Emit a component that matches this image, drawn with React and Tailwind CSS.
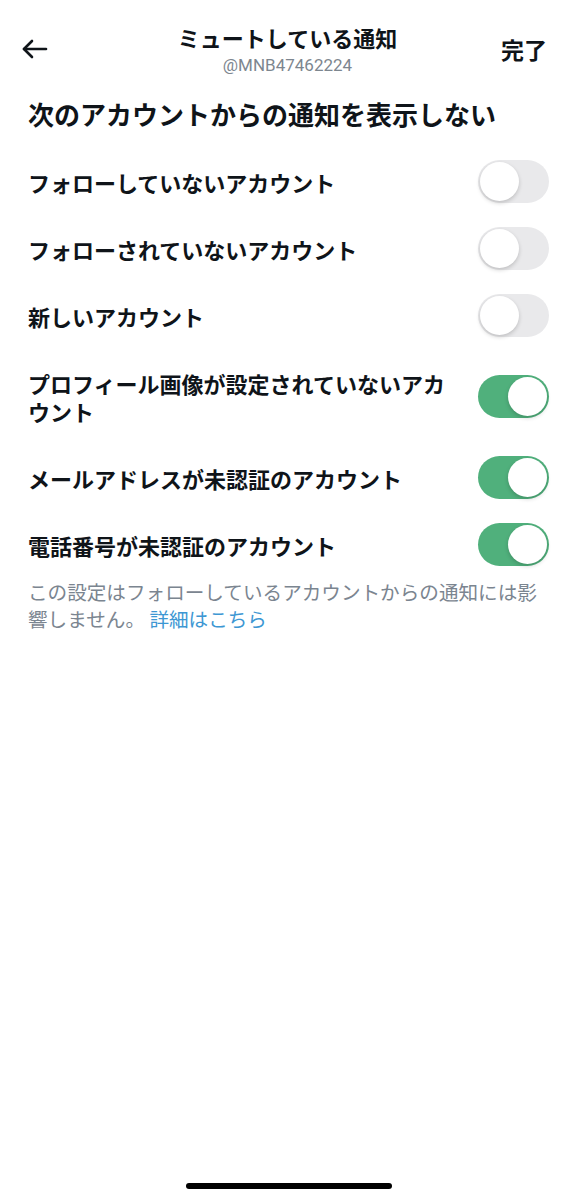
import { useState } from "react"

const jp = { fontFamily: '"Noto Sans CJK JP", "Noto Sans", sans-serif' }

const initial = [
  { id: 1, label: "フォローしていないアカウント", on: false },
  { id: 2, label: "フォローされていないアカウント", on: false },
  { id: 3, label: "新しいアカウント", on: false },
  { id: 4, label: "プロフィール画像が設定されていないアカウント", on: true },
  { id: 5, label: "メールアドレスが未認証のアカウント", on: true },
  { id: 6, label: "電話番号が未認証のアカウント", on: true },
]

function Toggle({ on, onClick }) {
  return (
    <button
      onClick={onClick}
      className={`relative shrink-0 w-[71px] h-[43px] rounded-full transition-colors ${
        on ? "bg-[#50b07c]" : "bg-[#e9e9eb]"
      }`}
    >
      <span
        className={`absolute top-[2px] w-[39px] h-[39px] rounded-full bg-white shadow-[0_2px_4px_rgba(0,0,0,0.18)] transition-all ${
          on ? "left-[30px]" : "left-[2px]"
        }`}
      />
    </button>
  )
}

export default function App() {
  const [items, setItems] = useState(initial)

  const flip = (id) => setItems(items.map((it) => (it.id === id ? { ...it, on: !it.on } : it)))

  return (
    <div className="min-h-[1200px] flex flex-col bg-white text-[#0f1419]" style={jp}>
      {/* header */}
      <div className="flex items-center justify-between pt-[22px] pl-[22px] pr-[30px]">
        <button className="w-[26px] h-[26px] flex items-center justify-center">
          <svg width="26" height="22" viewBox="0 0 26 22" fill="none" stroke="#0f1419" strokeWidth="2.6" strokeLinecap="round" strokeLinejoin="round">
            <path d="M24 11H2" />
            <path d="M10 3L2 11l8 8" />
          </svg>
        </button>
        <div className="flex flex-col items-center ml-[26px]">
          <div className="text-[22px] leading-[30px] font-bold">ミュートしている通知</div>
          <div className="mt-[2px] text-[17px] leading-[22px] text-[#7d868f]" style={{ fontFamily: "Roboto, sans-serif" }}>
            @MNB47462224
          </div>
        </div>
        <button className="text-[23px] leading-[30px] font-semibold">完了</button>
      </div>

      <div className="px-[28px]">
        <h1 className="mt-[21px] text-[26px] leading-[34px] font-bold">次のアカウントからの通知を表示しない</h1>

        <div className="mt-[17px]">
          {items.map((it) => (
            <div key={it.id} className="flex items-center justify-between gap-[24px]">
              <div className="flex-1 py-[19.5px] text-[22px] leading-[28px] font-semibold">{it.label}</div>
              <Toggle on={it.on} onClick={() => flip(it.id)} />
            </div>
          ))}
        </div>

        <p className="text-[19.6px] leading-[27px] text-[#7b8590]">
          この設定はフォローしているアカウントからの通知には影響しません。 <span className="text-[#3d97d3]">詳細はこちら</span>
        </p>
      </div>

      <div className="mt-auto mb-[11px] mx-auto w-[206px] h-[6px] rounded-full bg-black" />
    </div>
  )
}
